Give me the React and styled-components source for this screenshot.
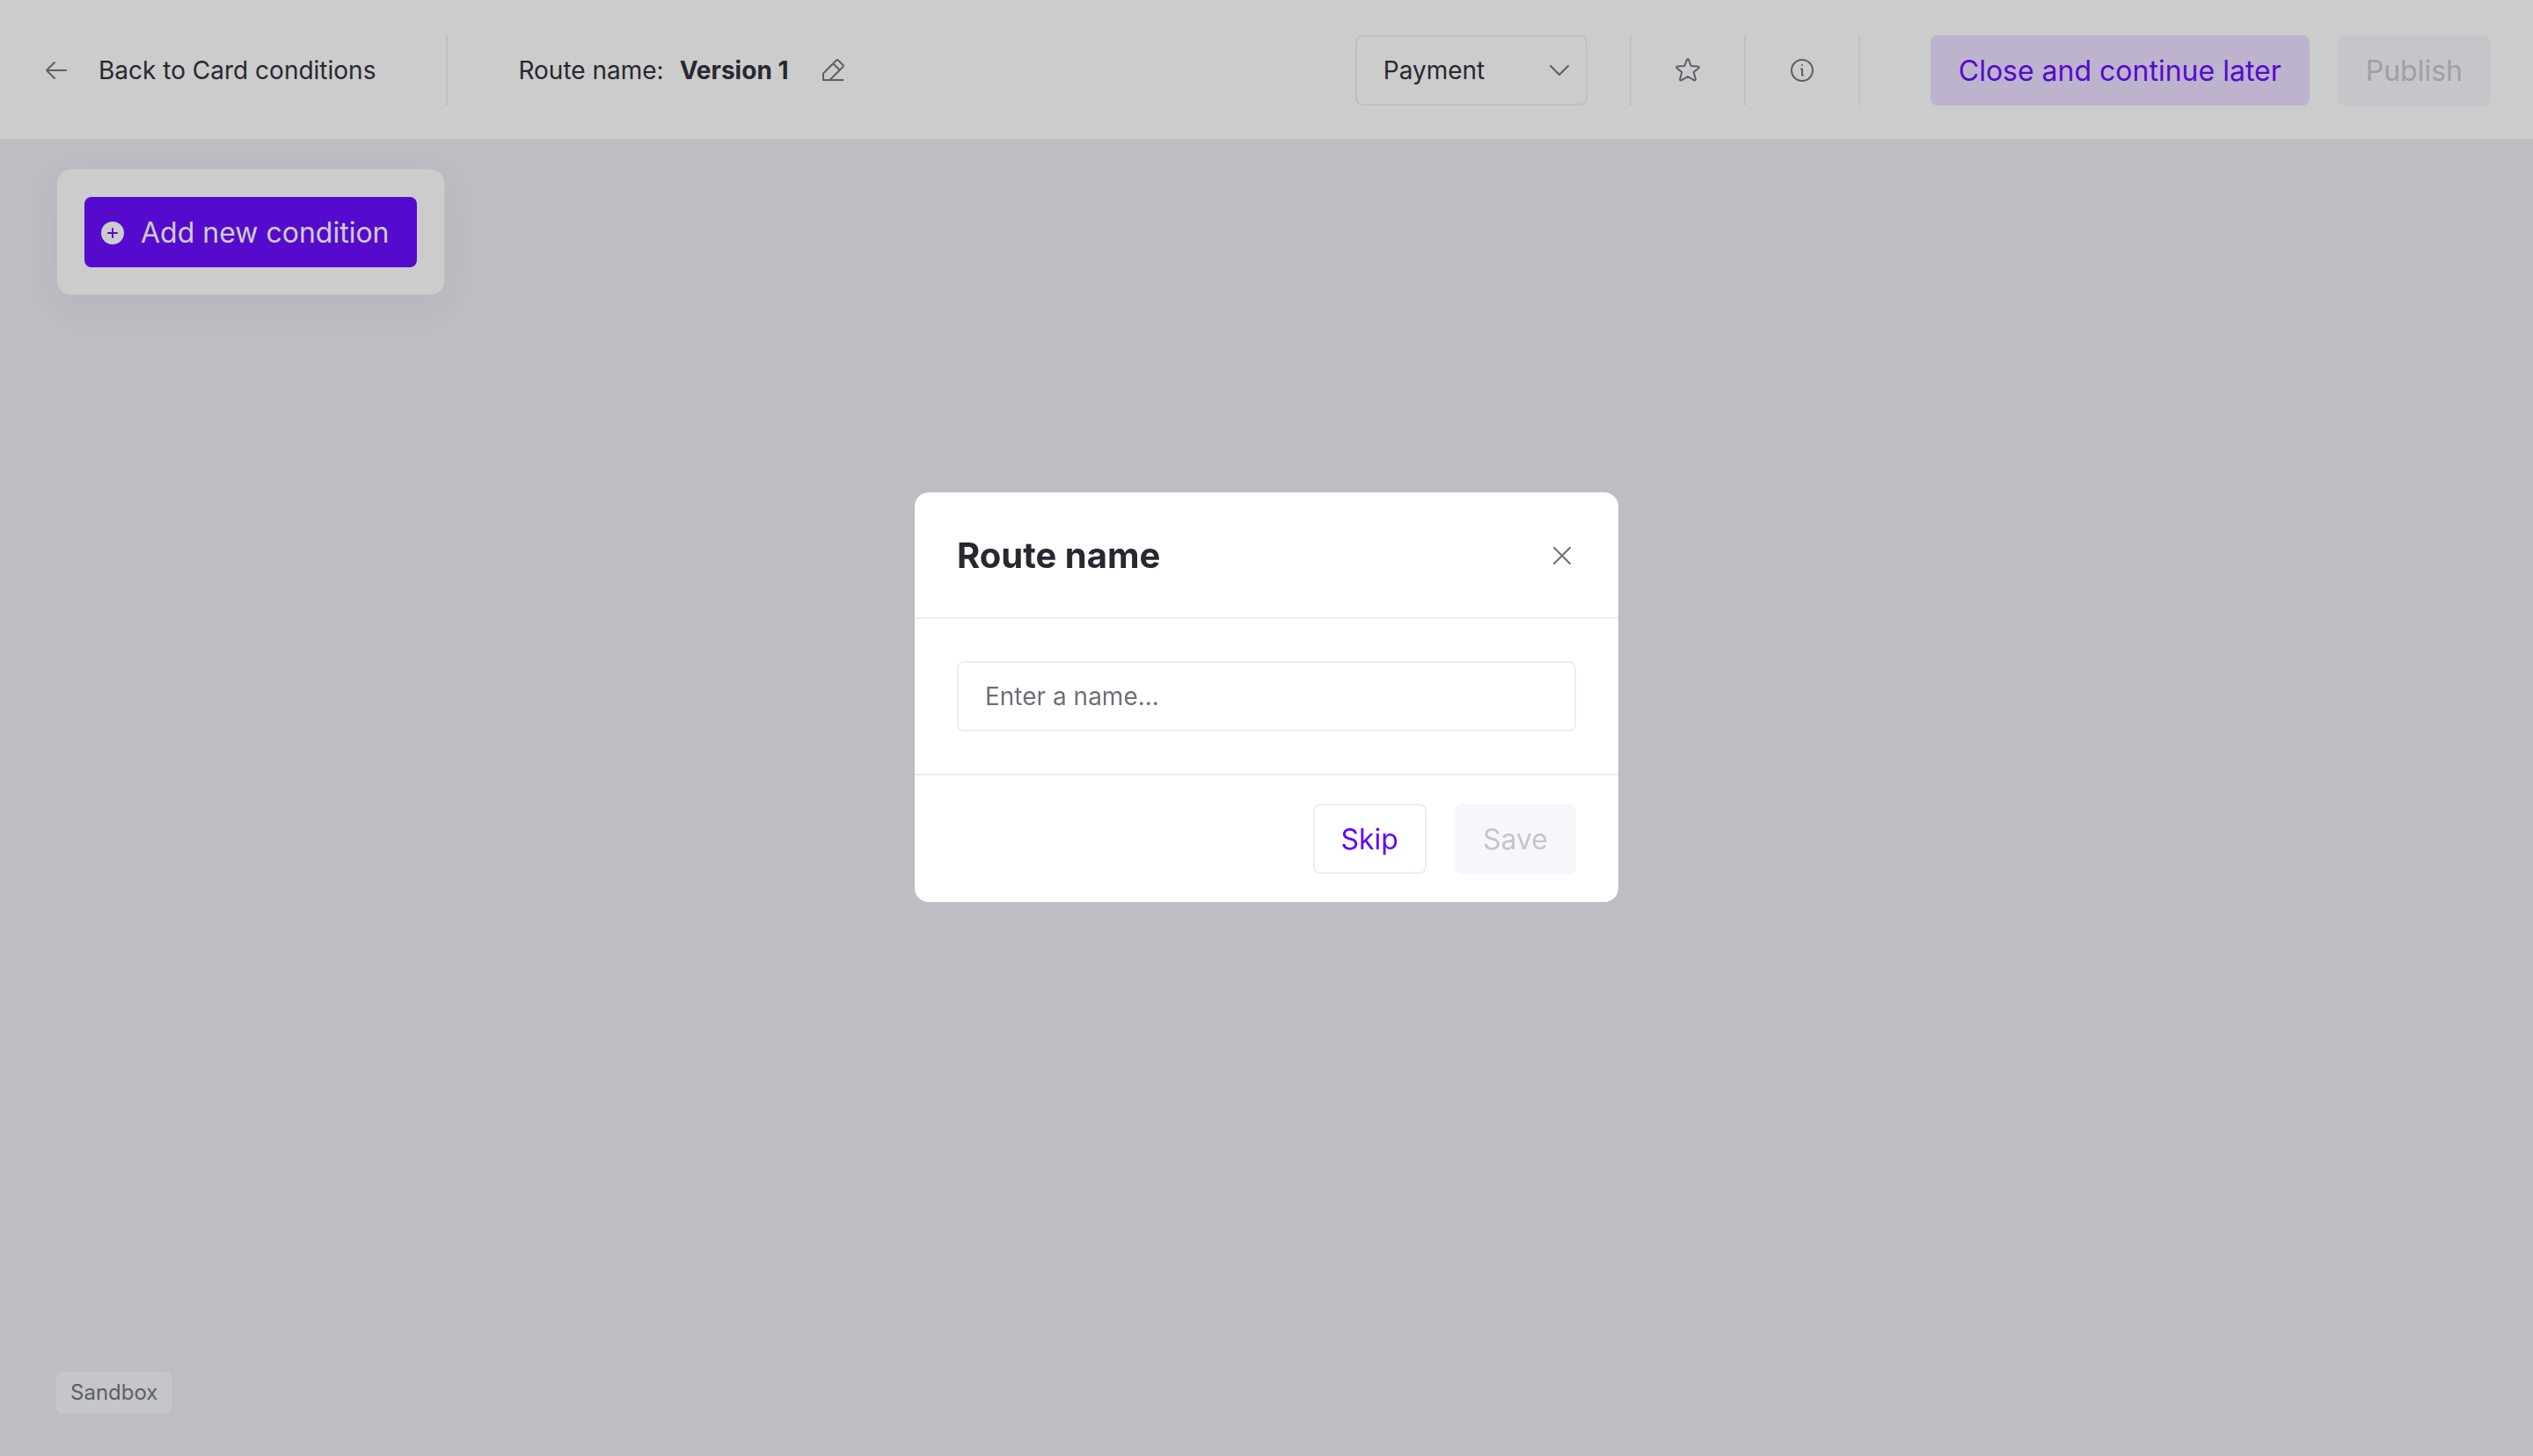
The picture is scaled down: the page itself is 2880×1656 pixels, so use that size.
import React, { useState } from "react";
import styled, { createGlobalStyle, css } from "styled-components";

const GlobalStyle = createGlobalStyle`
  * { box-sizing: border-box; }
  html, body, #root { height: 100%; }
  body {
    margin: 0;
    background: #efeaf2;
    color: #272930;
    font-family: Inter, sans-serif;
    font-size: 28px;
    line-height: 40px;
  }
  button, input, select { font: inherit; color: inherit; }
`;

const Page = styled.div`
  display: flex;
  flex-direction: column;
  min-height: 100vh;
`;

const Header = styled.header`
  display: flex;
  align-items: center;
  padding: 40px 48px 38px;
  background: #fff;
  border-bottom: 2px solid #ebeef3;
`;

const Section = styled.div`
  display: flex;
  align-items: center;
  height: 80px;
  gap: ${(p) => p.$gap || 0}px;
  padding: 0 ${(p) => p.$right || 0}px 0 ${(p) => p.$left || 0}px;
  ${(p) => p.$divided && css`border-right: 2px solid #ebeef3;`}
`;

const BackLink = styled.a`
  display: flex;
  align-items: center;
  gap: 32px;
  color: inherit;
  text-decoration: none;
`;

const Spacer = styled.div`
  flex: 1;
`;

const Icon = styled.svg`
  display: block;
  flex: none;
  width: 32px;
  height: 32px;
  fill: none;
  stroke: #6d7078;
  stroke-width: 2;
  stroke-linecap: round;
  stroke-linejoin: round;
`;

const IconButton = styled.button`
  display: flex;
  padding: 0;
  border: 0;
  background: none;
  cursor: pointer;
`;

const Name = styled.strong`
  font-weight: 700;
`;

const SelectBox = styled.div`
  display: grid;
  align-items: center;
  width: 264px;
  height: 80px;

  & > * { grid-area: 1 / 1; }
  & > svg { justify-self: end; margin-right: 16px; pointer-events: none; }
`;

const Select = styled.select`
  appearance: none;
  width: 100%;
  height: 100%;
  padding: 0 56px 0 30px;
  border: 2px solid #ebeef3;
  border-radius: 8px;
  background: #fff;
`;

const variants = {
  primary: css`background: #6400ff; color: #fff;`,
  soft: css`background: #ecdfff; color: #6400ff;`,
  outline: css`background: #fff; color: #6400ff; border-color: #ebeef3;`,
  disabled: css`background: #f6f7fb; color: #c4c6ca;`,
};

const Button = styled.button`
  display: flex;
  align-items: center;
  gap: 16px;
  height: 80px;
  padding: 2px 30px 0 ${(p) => (p.$icon ? 14 : 30)}px;
  border: 2px solid transparent;
  border-radius: 8px;
  font-size: 32px;
  white-space: nowrap;
  ${(p) => variants[p.$variant]}
`;

const Canvas = styled.main`
  flex: 1;
  display: flex;
  flex-direction: column;
  justify-content: space-between;
  align-items: flex-start;
  padding: 32px 64px 48px;
`;

const Card = styled.div`
  padding: 31px;
  border: 1px solid #ebeef3;
  border-radius: 16px;
  background: #fff;
  box-shadow: 0 12px 40px rgba(39, 60, 64, 0.06);
`;

const Tag = styled.span`
  padding: 4px 16px;
  border-radius: 8px;
  background: #f6f7fb;
  color: #6d7078;
  font-size: 24px;
`;

const Overlay = styled.div`
  position: fixed;
  inset: 0;
  display: flex;
  align-items: center;
  justify-content: center;
  padding-bottom: 70px;
  background: rgba(40, 41, 48, 0.24);
`;

const Dialog = styled.form`
  width: 800px;
  border-radius: 16px;
  background: #fff;
`;

const DialogHeader = styled.div`
  display: flex;
  align-items: center;
  justify-content: space-between;
  height: 144px;
  padding: 2px 48px 0;
  border-bottom: 2px solid #ebeef3;
`;

const Title = styled.h2`
  margin: 0;
  font-size: 40px;
  line-height: 48px;
  font-weight: 700;
`;

const DialogBody = styled.div`
  padding: 48px;
`;

const Input = styled.input`
  display: block;
  width: 100%;
  height: 80px;
  padding: 0 30px;
  border: 2px solid #ebeef3;
  border-radius: 8px;
  background: #fff;
  &::placeholder { color: #6d7078; opacity: 1; }
`;

const DialogFooter = styled.div`
  display: flex;
  justify-content: flex-end;
  gap: 32px;
  padding: 32px 48px;
  border-top: 2px solid #ebeef3;
`;

const ArrowIcon = () => (
  <Icon viewBox="0 0 32 32" aria-hidden="true">
    <path d="M27 16H5M14 7l-9 9 9 9" />
  </Icon>
);

const PencilIcon = () => (
  <Icon viewBox="0 0 32 32" aria-hidden="true">
    <path d="M12.500 27H5v-7.500L20 4.500a1.500 1.500 0 0 1 2 0L27.500 10a1.500 1.500 0 0 1 0 2L12.500 27h15M16.500 8.500l7 7" />
  </Icon>
);

const ChevronIcon = () => (
  <Icon viewBox="0 0 32 32" aria-hidden="true">
    <path d="M6 11l10 10 10-10" />
  </Icon>
);

const StarIcon = () => (
  <Icon viewBox="0 0 32 32" aria-hidden="true">
    <path d="M17 3.800l2.700 7.200 8 .4c1.100.1 1.500 1.300.7 2l-5.700 4.700 2.200 8c.3 1-.8 1.800-1.600 1.200L16 23l-7.300 4.300c-.8.600-1.900-.2-1.600-1.200l2.200-8-5.700-4.700c-.8-.7-.4-1.900.7-2l8-.4L15 3.800c.4-.9 1.600-.9 2 0z" />
  </Icon>
);

const InfoIcon = () => (
  <Icon viewBox="0 0 32 32" aria-hidden="true">
    <circle cx="16" cy="16" r="12" />
    <path d="M15 14.500h1v7h1" />
    <circle cx="16" cy="10" r="1" fill="#6d7078" stroke="none" />
  </Icon>
);

const CloseIcon = () => (
  <Icon viewBox="0 0 32 32" aria-hidden="true">
    <path d="M7 7l18 18M25 7L7 25" />
  </Icon>
);

const PlusIcon = () => (
  <Icon viewBox="0 0 32 32" aria-hidden="true">
    <circle cx="16" cy="16" r="13" fill="#fff" stroke="none" />
    <path d="M11 16h10M16 11v10" stroke="#6400ff" />
  </Icon>
);

export default function App() {
  const [name, setName] = useState("");
  return (
    <>
      <GlobalStyle />
      <Page>
        <Header>
          <Section $right={80} $divided>
            <BackLink href="#conditions">
              <ArrowIcon />
              Back to Card conditions
            </BackLink>
          </Section>
          <Section $left={80} $gap={18}>
            <span>Route name:</span>
            <Name>Version 1</Name>
            <Section $left={16}>
              <IconButton type="button" aria-label="Edit route name">
                <PencilIcon />
              </IconButton>
            </Section>
          </Section>
          <Spacer />
          <Section $right={48} $divided>
            <SelectBox>
              <Select aria-label="Route type" defaultValue="payment">
                <option value="payment">Payment</option>
              </Select>
              <ChevronIcon />
            </SelectBox>
          </Section>
          <Section $left={48} $right={48} $divided>
            <IconButton type="button" aria-label="Favourite">
              <StarIcon />
            </IconButton>
          </Section>
          <Section $left={48} $right={48} $divided>
            <IconButton type="button" aria-label="Information">
              <InfoIcon />
            </IconButton>
          </Section>
          <Section $left={80} $gap={32}>
            <Button type="button" $variant="soft">Close and continue later</Button>
            <Button type="button" $variant="disabled" disabled>Publish</Button>
          </Section>
        </Header>
        <Canvas>
          <Card>
            <Button type="button" $variant="primary" $icon>
              <PlusIcon />
              Add new condition
            </Button>
          </Card>
          <Tag>Sandbox</Tag>
        </Canvas>
      </Page>
      <Overlay>
        <Dialog role="dialog" aria-modal="true" aria-labelledby="dialog-title">
          <DialogHeader>
            <Title id="dialog-title">Route name</Title>
            <IconButton type="button" aria-label="Close">
              <CloseIcon />
            </IconButton>
          </DialogHeader>
          <DialogBody>
            <Input
              aria-labelledby="dialog-title"
              placeholder="Enter a name..."
              value={name}
              onChange={(e) => setName(e.target.value)}
            />
          </DialogBody>
          <DialogFooter>
            <Button type="button" $variant="outline">Skip</Button>
            <Button type="submit" $variant="disabled" disabled>Save</Button>
          </DialogFooter>
        </Dialog>
      </Overlay>
    </>
  );
}
